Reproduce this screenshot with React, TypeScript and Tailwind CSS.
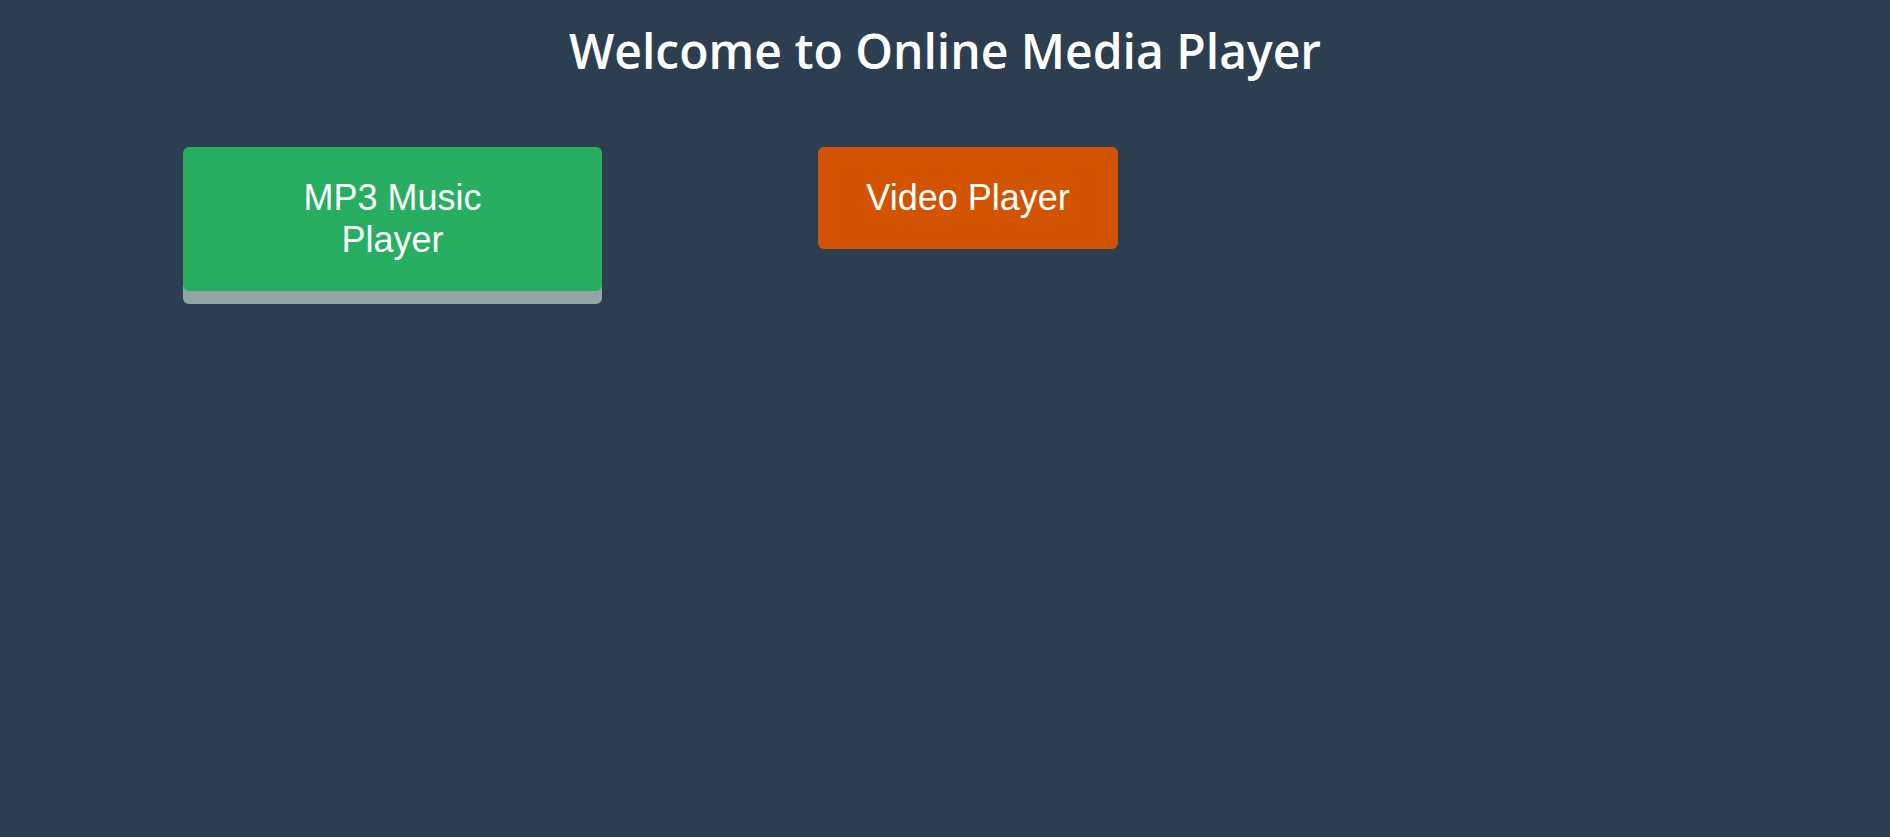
import React from 'react';

export default function App() {
  return (
    <div className="min-h-[837px] w-full bg-[#2c3e50]">
      {/* Heading */}
      <h1 className="pt-[16px] text-center text-[48px] font-semibold leading-[70px] text-white [font-family:'Open_Sans',sans-serif]">
        Welcome to Online Media Player
      </h1>

      {/* Player choices */}
      <div className="mt-[61px] flex items-start gap-[216px] pl-[183px] [font-family:'Liberation_Sans',Arial,sans-serif]">
        <button className="w-[419px] rounded-[6px] bg-[#27ae60] py-[30px] text-[36px] leading-[42px] text-white shadow-[0_13px_0_#95a5a6]">
          MP3 Music
          <br />
          Player
        </button>
        <button className="w-[300px] rounded-[6px] bg-[#d35400] py-[30px] text-[36px] leading-[42px] text-white">
          Video Player
        </button>
      </div>
    </div>
  );
}
